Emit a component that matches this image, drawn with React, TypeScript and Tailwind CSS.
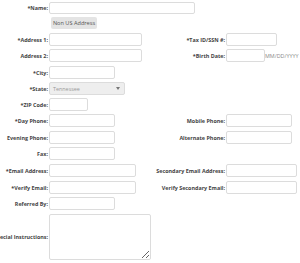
const font = { fontFamily: '"Open Sans", "Liberation Sans", sans-serif' };

type Field = { label: string; w: number; req?: boolean };

const Label = ({ text, req, className }: { text: string; req?: boolean; className: string }) => (
  <div className={`${className} text-right text-[5.4px] font-bold leading-[8px] text-[#444] whitespace-nowrap pr-[1px]`}>
    {req && '*'}
    {text}:
  </div>
);

const Input = ({ w, h = 13 }: { w: number; h?: number }) => (
  <div className="shrink-0 rounded-[2px] border border-[#dcdcdc] bg-white" style={{ width: w, height: h }} />
);

const Row = ({
  left,
  right,
  pitch,
  extra
}: {
  left: Field;
  right?: Field;
  pitch: number;
  extra?: string;
}) => (
  <div className="flex items-start" style={{ height: pitch }}>
    <div className="flex w-[150px] shrink-0 items-center">
      <Label text={left.label} req={left.req} className="w-[49px] shrink-0 flex justify-end" />
      <Input w={left.w} />
    </div>
    {right && (
      <div className="flex items-center">
        <Label text={right.label} req={right.req} className="w-[76px] shrink-0" />
        <Input w={right.w} />
        {extra && <span className="text-[5.4px] leading-[8px] text-[#8a8a8a]">{extra}</span>}
      </div>
    )}
  </div>
);

export default function App() {
  return (
    <div className="h-[263px] w-[300px] overflow-hidden bg-white" style={font}>
      <div className="flex items-center" style={{ height: 16 }}>
        <Label text="Name" req className="w-[49px] shrink-0" />
        <Input w={146} h={12} />
      </div>
      <div className="flex items-start pl-[51px] pt-[1px]" style={{ height: 17 }}>
        <div className="flex h-[12px] w-[46px] items-center justify-center rounded-[2px] bg-[#e4e4e4] text-[5.6px] leading-[8px] text-[#555]">
          Non US Address
        </div>
      </div>
      <Row left={{ label: 'Address 1', w: 93, req: true }} right={{ label: 'Tax ID/SSN #', w: 51, req: true }} pitch={16} />
      <Row
        left={{ label: 'Address 2', w: 93 }}
        right={{ label: 'Birth Date', w: 39, req: true }}
        extra="MM/DD/YYYY"
        pitch={17}
      />
      <Row left={{ label: 'City', w: 66, req: true }} pitch={16} />
      <div className="flex items-start" style={{ height: 16 }}>
        <div className="flex items-center">
          <Label text="State" req className="w-[49px] shrink-0" />
          <div className="flex h-[13px] w-[76px] items-center justify-between rounded-[2px] border border-[#dcdcdc] bg-[#eeeeee] px-[3px]">
            <span className="text-[5.4px] leading-[8px] text-[#999]">Tennessee</span>
            <svg width="4" height="3" viewBox="0 0 4 3" className="mr-[1px]">
              <path d="M0 0 L4 0 L2 3 Z" fill="#777" />
            </svg>
          </div>
        </div>
      </div>
      <Row left={{ label: 'ZIP Code', w: 39, req: true }} pitch={16} />
      <Row left={{ label: 'Day Phone', w: 66, req: true }} right={{ label: 'Mobile Phone', w: 66 }} pitch={17} />
      <Row left={{ label: 'Evening Phone', w: 66 }} right={{ label: 'Alternate Phone', w: 66 }} pitch={16} />
      <Row left={{ label: 'Fax', w: 66 }} pitch={17} />
      <Row
        left={{ label: 'Email Address', w: 87, req: true }}
        right={{ label: 'Secondary Email Address', w: 71 }}
        pitch={17}
      />
      <Row
        left={{ label: 'Verify Email', w: 87, req: true }}
        right={{ label: 'Verify Secondary Email', w: 71 }}
        pitch={16}
      />
      <Row left={{ label: 'Referred By', w: 66 }} pitch={17} />
      <div className="flex items-center">
        <Label text="Special Instructions" className="w-[49px] shrink-0 flex justify-end" />
        <textarea className="h-[46px] w-[102px] shrink-0 rounded-[2px] border border-[#dcdcdc] bg-white" />
      </div>
    </div>
  );
}
